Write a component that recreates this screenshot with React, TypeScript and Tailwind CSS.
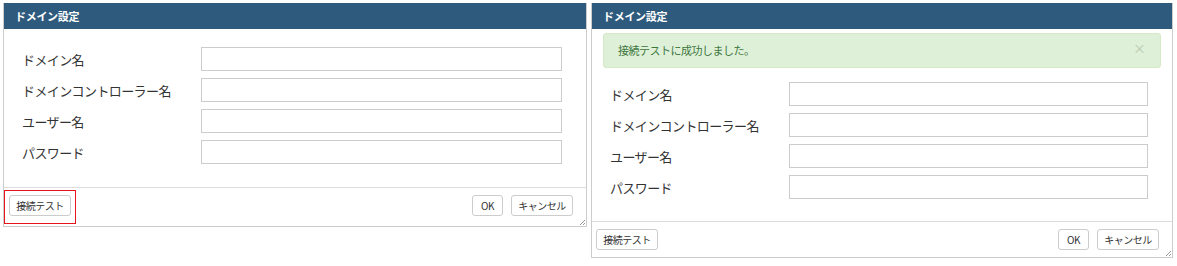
const font = { fontFamily: '"Noto Sans CJK JP", "Noto Sans", sans-serif' }

const fields = ['ドメイン名', 'ドメインコントローラー名', 'ユーザー名', 'パスワード']

function Grip() {
  return (
    <svg className="absolute right-0 bottom-0" width="8" height="8" viewBox="0 0 8 8">
      <path d="M7 2L2 7M7 5L5 7" stroke="#9a9a9a" strokeWidth="1" />
    </svg>
  )
}

function Btn({ children, w }: { children: React.ReactNode; w: string }) {
  return (
    <button
      className={`${w} h-[21px] border border-[#cccccc] rounded-[3px] bg-white text-[10px] tracking-[-0.5px] text-[#333] flex items-center justify-center`}
    >
      {children}
    </button>
  )
}

function Fields() {
  return (
    <div className="grid grid-cols-[179px_1fr] gap-y-[7px] pl-[18px] pr-[24px] items-center">
      {fields.map((f) => (
        <div key={f} className="contents">
          <div className="text-[13px] tracking-[-0.6px] text-[#333] leading-none">{f}</div>
          <div className="h-[24px] border border-[#cccccc] bg-white" />
        </div>
      ))}
    </div>
  )
}

function Header() {
  return (
    <div className="h-[26px] bg-[#2e5a7d] text-white text-[11px] font-bold flex items-center px-[11px] tracking-[-0.3px]">
      ドメイン設定
    </div>
  )
}

export default function App() {
  return (
    <div className="min-h-[266px] bg-white pt-[3px] pl-[3px] flex items-start gap-[4px]" style={font}>
      {/* left dialog */}
      <div className="relative w-[584px] border border-[#cccccc] border-t-0">
        <Header />
        <div className="pt-[18px] pb-[23px]">
          <Fields />
        </div>
        <div className="border-t border-[#dddddd] pt-[2px] pb-[2px] flex justify-between items-start pr-[13px]">
          <div className="border border-[#e8141c] pt-[4px] pb-[7px] px-[4px]">
            <Btn w="w-[62px]">接続テスト</Btn>
          </div>
          <div className="flex gap-[8px] mt-[5px]">
            <Btn w="w-[31px]">OK</Btn>
            <Btn w="w-[62px]">キャンセル</Btn>
          </div>
        </div>
        <Grip />
      </div>

      {/* right dialog */}
      <div className="relative w-[582px] border border-[#cccccc] border-t-0">
        <Header />
        <div className="pt-[4px] pb-[22px]">
          <div className="mx-[11px] h-[35px] border border-[#d6e9c6] bg-[#dff0d8] rounded-[3px] flex items-center justify-between pl-[14px] pr-[14px] mb-[14px]">
            <span className="text-[11px] tracking-[-0.5px] text-[#3c763d]">接続テストに成功しました。</span>
            <span className="text-[13px] text-[#b5c9ad] leading-none -mt-[6px]">×</span>
          </div>
          <Fields />
        </div>
        <div className="border-t border-[#dddddd] pt-[7px] pb-[7px] pl-[4px] pr-[13px] flex justify-between items-start">
          <Btn w="w-[62px]">接続テスト</Btn>
          <div className="flex gap-[8px]">
            <Btn w="w-[31px]">OK</Btn>
            <Btn w="w-[62px]">キャンセル</Btn>
          </div>
        </div>
        <Grip />
      </div>
    </div>
  )
}
